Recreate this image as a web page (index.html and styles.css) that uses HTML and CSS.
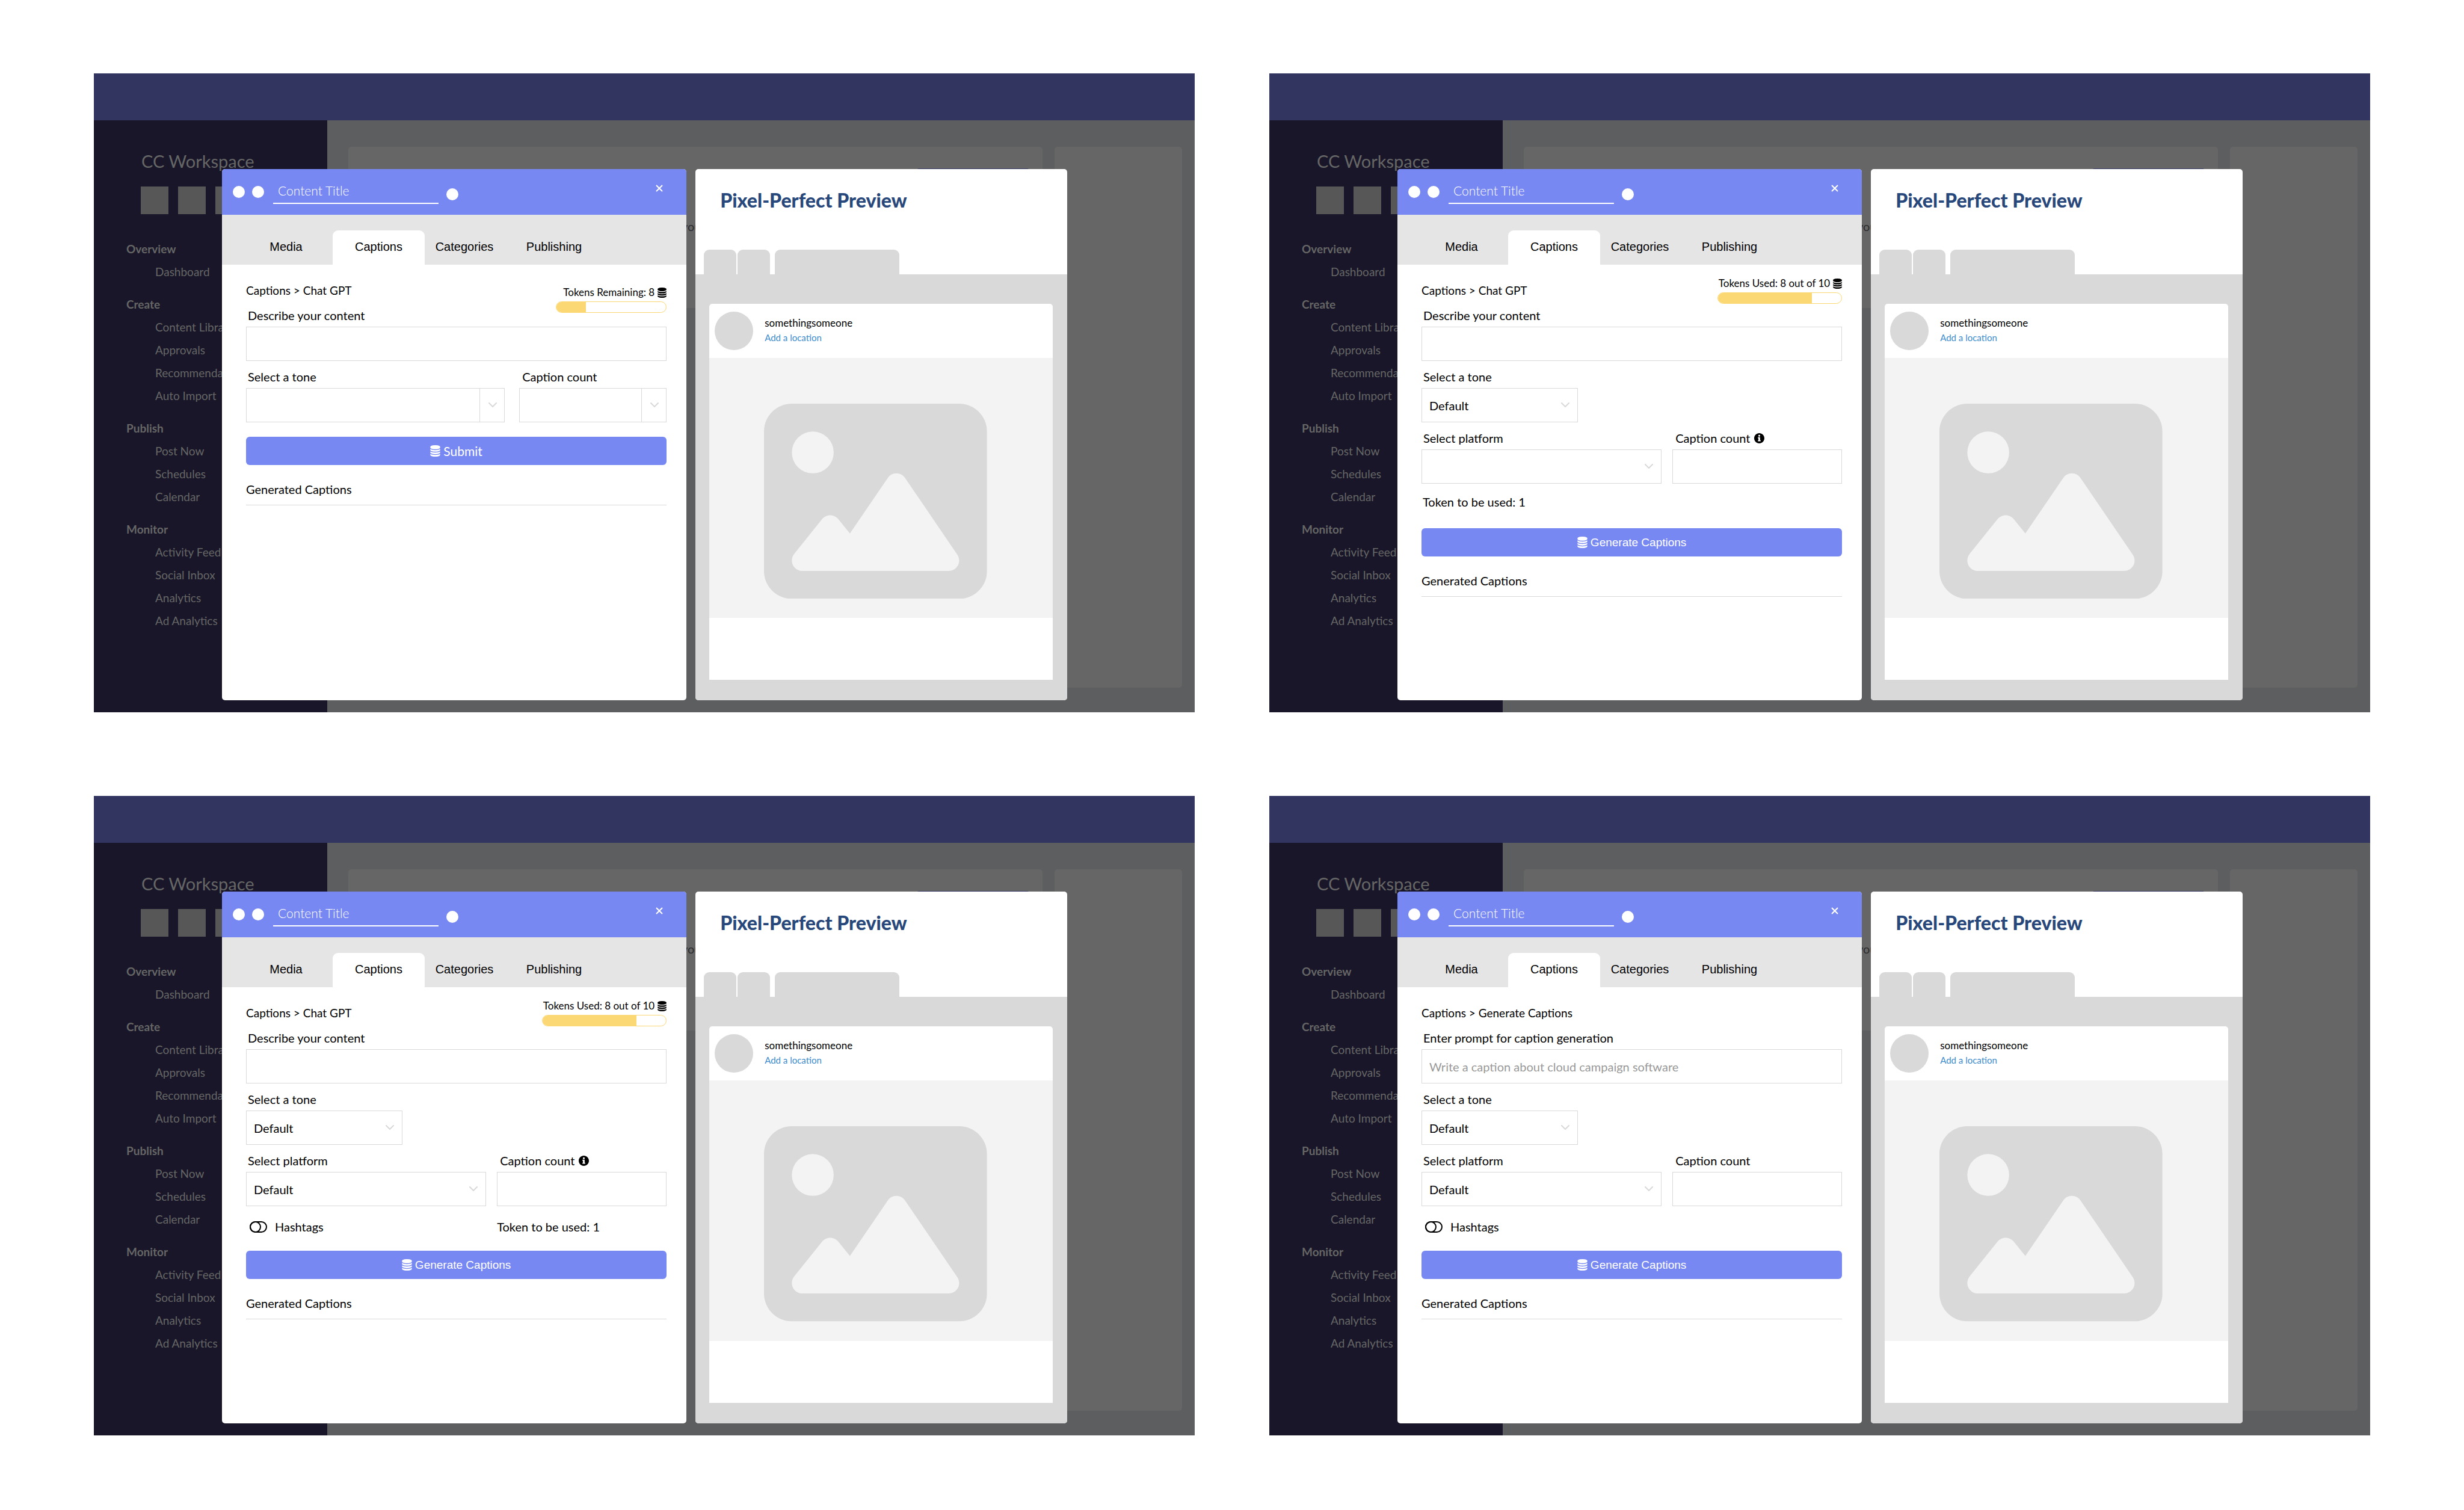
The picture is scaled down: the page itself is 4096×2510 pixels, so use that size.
FILE: index.html
```html
<!DOCTYPE html>
<html lang="en">
<head>
<meta charset="utf-8">
<title>Caption generation screens</title>
<link rel="stylesheet" href="styles.css">
</head>
<body>
<svg class="sprite" aria-hidden="true">
  <symbol id="i-db" viewBox="0 0 1536 1792"><path d="M768 768q237 0 443-43t325-127v170q0 69-103 128t-280 93.5-385 34.500-385-34.500-280-93.500-103-128v-170q119 84 325 127t443 43zM768 1536q237 0 443-43t325-127v170q0 69-103 128t-280 93.500-385 34.500-385-34.500-280-93.500-103-128v-170q119 84 325 127t443 43zM768 1152q237 0 443-43t325-127v170q0 69-103 128t-280 93.500-385 34.500-385-34.500-280-93.500-103-128v-170q119 84 325 127t443 43zM768 0q208 0 385 34.500t280 93.500 103 128v128q0 69-103 128t-280 93.500-385 34.500-385-34.500-280-93.500-103-128v-128q0-69 103-128t280-93.500 385-34.500z"/></symbol>
  <symbol id="i-info" viewBox="8 8 496 496"><path d="M256 8C119.043 8 8 119.083 8 256c0 136.997 111.043 248 248 248s248-111.003 248-248C504 119.083 392.957 8 256 8zm0 80c26 0 46 19 46 44s-20 44-46 44-46-19-46-44 20-44 46-44zm66 304c0 6.627-5.373 12-12 12H202c-6.627 0-12-5.373-12-12v-32c0-6.627 5.373-12 12-12h14v-84h-14c-6.627 0-12-5.373-12-12v-32c0-6.627 5.373-12 12-12h82c6.627 0 12 5.373 12 12v128h16c6.627 0 12 5.373 12 12v32z"/></symbol>
  <symbol id="i-chevron" viewBox="0 0 14 9"><path d="M1 1l6 6 6-6" fill="none" stroke="currentColor" stroke-width="2" stroke-linecap="round" stroke-linejoin="round"/></symbol>
  <symbol id="i-close" viewBox="0 0 12 12"><path d="M1 1l10 10M11 1L1 11" fill="none" stroke="currentColor" stroke-width="2"/></symbol>
  <symbol id="i-image" viewBox="0 32 512 448"><path d="M0 96C0 60.700 28.700 32 64 32H448c35.300 0 64 28.700 64 64V416c0 35.300-28.700 64-64 64H64c-35.300 0-64-28.700-64-64V96zM323.800 202.500c-4.500-6.600-11.900-10.500-19.800-10.500s-15.400 3.900-19.800 10.500l-87 127.600L170.700 297c-4.600-5.700-11.500-9-18.700-9s-14.200 3.300-18.700 9l-64 80c-5.800 7.200-6.900 17.100-2.900 25.400s12.400 13.600 21.600 13.600h96 32H424c8.900 0 17.100-4.900 21.200-12.800s3.600-17.400-1.400-24.700l-120-176zM112 192a48 48 0 1 0 0-96 48 48 0 1 0 0 96z"/></symbol>
</svg>

<main class="board">

  <section class="screen">
    <div class="workspace">
      <div class="topbar"></div>
      <aside class="sidebar">
        <h2 class="ws-name">CC Workspace</h2>
        <div class="tiles"><i></i><i></i><i></i></div>
        <nav class="menu">
          <h3>Overview</h3><a href="#">Dashboard</a>
          <h3>Create</h3><a href="#">Content Library</a><a href="#">Approvals</a><a href="#">Recommendations</a><a href="#">Auto Import</a>
          <h3>Publish</h3><a href="#">Post Now</a><a href="#">Schedules</a><a href="#">Calendar</a>
          <h3>Monitor</h3><a href="#">Activity Feed</a><a href="#">Social Inbox</a><a href="#">Analytics</a><a href="#">Ad Analytics</a>
        </nav>
      </aside>
      <div class="canvas">
        <div class="sheet"><span class="sheet-action"></span><p>you</p></div>
        <div class="sheet-side"></div>
      </div>
    </div>
    <div class="overlay">
      <div class="modal">
        <header class="modal-head">
          <i class="dot"></i><i class="dot"></i>
          <input class="title-input" type="text" aria-label="Content title" placeholder="Content Title">
          <i class="dot dot-low"></i>
          <button class="close" type="button" aria-label="Close"><svg><use href="#i-close"/></svg></button>
        </header>
        <div class="tabs">
          <button type="button">Media</button><button class="active" type="button">Captions</button><button type="button">Categories</button><button type="button">Publishing</button>
        </div>
        <form class="panel">
          <div class="intro">
            <div>
              <p class="crumbs"><a href="#">Captions</a> &gt; Chat GPT</p>
              <label class="label" for="a-describe">Describe your content</label>
            </div>
            <div class="tokens tokens-low">
              <p>Tokens Remaining: 8 <svg class="db"><use href="#i-db"/></svg></p>
              <div class="bar bar-short"><i style="width:27%"></i></div>
            </div>
          </div>
          <input class="box" id="a-describe" type="text">
          <div class="row row-wide">
            <div>
              <label class="label" for="a-tone">Select a tone</label>
              <div class="select split"><select class="box" id="a-tone"><option></option></select><span class="arrow"><svg><use href="#i-chevron"/></svg></span></div>
            </div>
            <div>
              <label class="label label-in" for="a-count">Caption count</label>
              <div class="select split"><select class="box" id="a-count"><option></option></select><span class="arrow"><svg><use href="#i-chevron"/></svg></span></div>
            </div>
          </div>
          <button class="submit submit-text" type="button"><svg><use href="#i-db"/></svg>Submit</button>
          <h3 class="results">Generated Captions</h3>
        </form>
      </div>
      <div class="preview">
        <h2 class="preview-title">Pixel-Perfect Preview</h2>
        <div class="preview-tabs"><i></i><i></i><i class="long"></i></div>
        <div class="stage">
          <article class="post">
            <header class="post-head"><i class="avatar"></i><div><p>somethingsomeone</p><a href="#">Add a location</a></div></header>
            <div class="picture"><svg viewBox="0 0 512 448"><use href="#i-image"/></svg></div>
            <div class="post-foot"></div>
          </article>
        </div>
      </div>
    </div>
  </section>

  <section class="screen">
    <div class="workspace">
      <div class="topbar"></div>
      <aside class="sidebar">
        <h2 class="ws-name">CC Workspace</h2>
        <div class="tiles"><i></i><i></i><i></i></div>
        <nav class="menu">
          <h3>Overview</h3><a href="#">Dashboard</a>
          <h3>Create</h3><a href="#">Content Library</a><a href="#">Approvals</a><a href="#">Recommendations</a><a href="#">Auto Import</a>
          <h3>Publish</h3><a href="#">Post Now</a><a href="#">Schedules</a><a href="#">Calendar</a>
          <h3>Monitor</h3><a href="#">Activity Feed</a><a href="#">Social Inbox</a><a href="#">Analytics</a><a href="#">Ad Analytics</a>
        </nav>
      </aside>
      <div class="canvas">
        <div class="sheet"><span class="sheet-action"></span><p>you</p></div>
        <div class="sheet-side"></div>
      </div>
    </div>
    <div class="overlay">
      <div class="modal">
        <header class="modal-head">
          <i class="dot"></i><i class="dot"></i>
          <input class="title-input" type="text" aria-label="Content title" placeholder="Content Title">
          <i class="dot dot-low"></i>
          <button class="close" type="button" aria-label="Close"><svg><use href="#i-close"/></svg></button>
        </header>
        <div class="tabs">
          <button type="button">Media</button><button class="active" type="button">Captions</button><button type="button">Categories</button><button type="button">Publishing</button>
        </div>
        <form class="panel">
          <div class="intro">
            <div>
              <p class="crumbs"><a href="#">Captions</a> &gt; Chat GPT</p>
              <label class="label" for="b-describe">Describe your content</label>
            </div>
            <div class="tokens">
              <p>Tokens Used: 8 out of 10 <svg class="db"><use href="#i-db"/></svg></p>
              <div class="bar"><i style="width:76%"></i></div>
            </div>
          </div>
          <input class="box" id="b-describe" type="text">
          <label class="label" for="b-tone">Select a tone</label>
          <div class="select select-tone"><select class="box" id="b-tone"><option>Default</option></select><span class="arrow"><svg><use href="#i-chevron"/></svg></span></div>
          <div class="row">
            <div>
              <label class="label" for="b-platform">Select platform</label>
              <div class="select"><select class="box" id="b-platform"><option></option></select><span class="arrow"><svg><use href="#i-chevron"/></svg></span></div>
            </div>
            <div>
              <label class="label label-in" for="b-count">Caption count <svg class="info"><use href="#i-info"/></svg></label>
              <input class="box" id="b-count" type="text">
            </div>
          </div>
          <div class="row meta meta-cost"><p>Token to be used: 1</p></div>
          <button class="submit" type="button"><svg><use href="#i-db"/></svg>Generate Captions</button>
          <h3 class="results">Generated Captions</h3>
        </form>
      </div>
      <div class="preview">
        <h2 class="preview-title">Pixel-Perfect Preview</h2>
        <div class="preview-tabs"><i></i><i></i><i class="long"></i></div>
        <div class="stage">
          <article class="post">
            <header class="post-head"><i class="avatar"></i><div><p>somethingsomeone</p><a href="#">Add a location</a></div></header>
            <div class="picture"><svg viewBox="0 0 512 448"><use href="#i-image"/></svg></div>
            <div class="post-foot"></div>
          </article>
        </div>
      </div>
    </div>
  </section>

  <section class="screen">
    <div class="workspace">
      <div class="topbar"></div>
      <aside class="sidebar">
        <h2 class="ws-name">CC Workspace</h2>
        <div class="tiles"><i></i><i></i><i></i></div>
        <nav class="menu">
          <h3>Overview</h3><a href="#">Dashboard</a>
          <h3>Create</h3><a href="#">Content Library</a><a href="#">Approvals</a><a href="#">Recommendations</a><a href="#">Auto Import</a>
          <h3>Publish</h3><a href="#">Post Now</a><a href="#">Schedules</a><a href="#">Calendar</a>
          <h3>Monitor</h3><a href="#">Activity Feed</a><a href="#">Social Inbox</a><a href="#">Analytics</a><a href="#">Ad Analytics</a>
        </nav>
      </aside>
      <div class="canvas">
        <div class="sheet"><span class="sheet-action"></span><p>you</p></div>
        <div class="sheet-side"></div>
      </div>
    </div>
    <div class="overlay">
      <div class="modal">
        <header class="modal-head">
          <i class="dot"></i><i class="dot"></i>
          <input class="title-input" type="text" aria-label="Content title" placeholder="Content Title">
          <i class="dot dot-low"></i>
          <button class="close" type="button" aria-label="Close"><svg><use href="#i-close"/></svg></button>
        </header>
        <div class="tabs">
          <button type="button">Media</button><button class="active" type="button">Captions</button><button type="button">Categories</button><button type="button">Publishing</button>
        </div>
        <form class="panel">
          <div class="intro">
            <div>
              <p class="crumbs"><a href="#">Captions</a> &gt; Chat GPT</p>
              <label class="label" for="c-describe">Describe your content</label>
            </div>
            <div class="tokens">
              <p>Tokens Used: 8 out of 10 <svg class="db"><use href="#i-db"/></svg></p>
              <div class="bar"><i style="width:76%"></i></div>
            </div>
          </div>
          <input class="box" id="c-describe" type="text">
          <label class="label" for="c-tone">Select a tone</label>
          <div class="select select-tone"><select class="box" id="c-tone"><option>Default</option></select><span class="arrow"><svg><use href="#i-chevron"/></svg></span></div>
          <div class="row">
            <div>
              <label class="label" for="c-platform">Select platform</label>
              <div class="select"><select class="box" id="c-platform"><option>Default</option></select><span class="arrow"><svg><use href="#i-chevron"/></svg></span></div>
            </div>
            <div>
              <label class="label label-in" for="c-count">Caption count <svg class="info"><use href="#i-info"/></svg></label>
              <input class="box" id="c-count" type="text">
            </div>
          </div>
          <div class="row meta">
            <label class="switch"><input type="checkbox">Hashtags</label>
            <p>Token to be used: 1</p>
          </div>
          <button class="submit" type="button"><svg><use href="#i-db"/></svg>Generate Captions</button>
          <h3 class="results">Generated Captions</h3>
        </form>
      </div>
      <div class="preview">
        <h2 class="preview-title">Pixel-Perfect Preview</h2>
        <div class="preview-tabs"><i></i><i></i><i class="long"></i></div>
        <div class="stage">
          <article class="post">
            <header class="post-head"><i class="avatar"></i><div><p>somethingsomeone</p><a href="#">Add a location</a></div></header>
            <div class="picture"><svg viewBox="0 0 512 448"><use href="#i-image"/></svg></div>
            <div class="post-foot"></div>
          </article>
        </div>
      </div>
    </div>
  </section>

  <section class="screen">
    <div class="workspace">
      <div class="topbar"></div>
      <aside class="sidebar">
        <h2 class="ws-name">CC Workspace</h2>
        <div class="tiles"><i></i><i></i><i></i></div>
        <nav class="menu">
          <h3>Overview</h3><a href="#">Dashboard</a>
          <h3>Create</h3><a href="#">Content Library</a><a href="#">Approvals</a><a href="#">Recommendations</a><a href="#">Auto Import</a>
          <h3>Publish</h3><a href="#">Post Now</a><a href="#">Schedules</a><a href="#">Calendar</a>
          <h3>Monitor</h3><a href="#">Activity Feed</a><a href="#">Social Inbox</a><a href="#">Analytics</a><a href="#">Ad Analytics</a>
        </nav>
      </aside>
      <div class="canvas">
        <div class="sheet"><span class="sheet-action"></span><p>you</p></div>
        <div class="sheet-side"></div>
      </div>
    </div>
    <div class="overlay">
      <div class="modal">
        <header class="modal-head">
          <i class="dot"></i><i class="dot"></i>
          <input class="title-input" type="text" aria-label="Content title" placeholder="Content Title">
          <i class="dot dot-low"></i>
          <button class="close" type="button" aria-label="Close"><svg><use href="#i-close"/></svg></button>
        </header>
        <div class="tabs">
          <button type="button">Media</button><button class="active" type="button">Captions</button><button type="button">Categories</button><button type="button">Publishing</button>
        </div>
        <form class="panel">
          <div class="intro">
            <div>
              <p class="crumbs"><a href="#">Captions</a> &gt; Generate Captions</p>
              <label class="label" for="d-prompt">Enter prompt for caption generation</label>
            </div>
          </div>
          <input class="box" id="d-prompt" type="text" placeholder="Write a caption about cloud campaign software">
          <label class="label" for="d-tone">Select a tone</label>
          <div class="select select-tone"><select class="box" id="d-tone"><option>Default</option></select><span class="arrow"><svg><use href="#i-chevron"/></svg></span></div>
          <div class="row">
            <div>
              <label class="label" for="d-platform">Select platform</label>
              <div class="select"><select class="box" id="d-platform"><option>Default</option></select><span class="arrow"><svg><use href="#i-chevron"/></svg></span></div>
            </div>
            <div>
              <label class="label label-in" for="d-count">Caption count</label>
              <input class="box" id="d-count" type="text">
            </div>
          </div>
          <div class="row meta">
            <label class="switch"><input type="checkbox">Hashtags</label>
          </div>
          <button class="submit" type="button"><svg><use href="#i-db"/></svg>Generate Captions</button>
          <h3 class="results">Generated Captions</h3>
        </form>
      </div>
      <div class="preview">
        <h2 class="preview-title">Pixel-Perfect Preview</h2>
        <div class="preview-tabs"><i></i><i></i><i class="long"></i></div>
        <div class="stage">
          <article class="post">
            <header class="post-head"><i class="avatar"></i><div><p>somethingsomeone</p><a href="#">Add a location</a></div></header>
            <div class="picture"><svg viewBox="0 0 512 448"><use href="#i-image"/></svg></div>
            <div class="post-foot"></div>
          </article>
        </div>
      </div>
    </div>
  </section>

</main>
</body>
</html>
```

FILE: styles.css
```css
*, *::before, *::after { box-sizing: border-box; }

body, h2, h3, p { margin: 0; }

body {
  background: #fff;
  color: #000;
  font-family: Lato, "Open Sans", sans-serif;
  font-size: 20px;
  line-height: 24px;
}

a { color: inherit; text-decoration: none; }
button, input, select { font: inherit; color: inherit; margin: 0; border: 0; border-radius: 0; background: none; }
svg { display: block; fill: currentColor; }
.sprite { display: none; }

/* Board of four screens */
.board {
  display: grid;
  grid-template-columns: 1fr 1fr;
  gap: 139px 124px;
  padding: 122px 156px;
}
.screen { display: grid; overflow: hidden; }
.workspace, .overlay { grid-area: 1 / 1; min-width: 0; }

/* Dimmed workspace behind the dialogs */
.workspace {
  display: grid;
  grid-template-columns: 388px 1fr;
  grid-template-rows: 78px 1fr;
  background: #5d5e60;
}
.topbar { grid-column: 1 / -1; background: #313560; }
.sidebar { background: #181628; color: #666; padding-top: 50px; }
.ws-name { padding-left: 79px; font-size: 29px; line-height: 36px; font-weight: 400; }
.tiles { display: flex; gap: 16px; margin: 24px 0 39px 78px; }
.tiles i { width: 46px; height: 46px; background: #575757; }
.menu { display: flex; flex-direction: column; padding-left: 54px; font-size: 19px; line-height: 38px; }
.menu h3 { margin-top: 16px; font-size: 19px; font-weight: 700; }
.menu h3:first-child { margin-top: 0; }
.menu a { padding-left: 48px; }
.canvas {
  display: grid;
  grid-template-columns: 1154fr 212fr;
  gap: 20px;
  align-items: start;
  padding: 44px 21px 41px 35px;
}
.sheet { display: flex; flex-direction: column; height: 268px; border-radius: 5px; background: #666; color: #2b2b2e; }
.sheet-action { align-self: flex-end; width: 189px; height: 40px; margin: 36px 21px 0 0; border-radius: 5px; background: #313560; }
.sheet p { margin-top: 44px; padding-left: 554px; }
.sheet-side { align-self: stretch; border-radius: 5px; background: #666; }

/* Dialog and preview, side by side */
.overlay {
  z-index: 1;
  display: grid;
  grid-template-columns: 5fr 4fr;
  gap: 15px;
  padding: 159px 212px 20px 213px;
}
.modal, .preview { overflow: hidden; border-radius: 5px; background: #fff; }

.modal-head { display: flex; align-items: center; gap: 12px; height: 76px; padding: 0 38px 0 18px; background: #7788f2; color: #fff; }
.dot { flex: none; width: 20px; height: 20px; border-radius: 50%; background: #fff; }
.dot-low { margin: 8px 0 0 1px; }
.title-input { width: 275px; height: 39px; margin-left: 3px; padding: 0 8px 3px; border-bottom: 2px solid #fff; font-size: 21px; font-weight: 300; }
.title-input::placeholder { color: #fff; opacity: 1; }
.close { margin: 0 0 12px auto; padding: 1px; }
.close svg { width: 12px; height: 12px; }

.tabs { display: grid; grid-template-columns: 155px 153px 132px 166px; height: 83px; padding: 26px 0 0 29px; background: #e5e5e5; }
.tabs button { padding: 0 0 3px; font-family: "Liberation Sans", Arial, sans-serif; font-size: 20px; }
.tabs .active { border-radius: 9px 9px 0 0; background: #fff; }

.panel { padding: 0 33px 0 40px; }
.intro { display: flex; justify-content: space-between; }
.crumbs { height: 58px; padding-top: 31px; font-size: 19px; }
.label { display: flex; align-items: flex-end; gap: 6px; height: 45px; padding: 0 3px 7px; }
.label-in { padding-left: 5px; }
.info { width: 17px; height: 17px; margin-bottom: 3px; }
.box { display: block; width: 100%; height: 57px; padding: 0 12px; border: 1px solid #d9d9d9; background: #fff; }
.box::placeholder { color: #999; opacity: 1; }

.tokens { display: flex; flex-direction: column; align-items: flex-end; gap: 5px; padding-top: 21px; }
.tokens-low { padding-top: 36px; }
.tokens p { display: flex; align-items: center; gap: 5px; font-size: 17px; line-height: 20px; }
.db { width: 15px; height: 17px; }
.bar { width: 207px; height: 19px; overflow: hidden; border: 1px solid #fcd874; border-radius: 10px; }
.bar-short { width: 184px; }
.bar i { display: block; height: 100%; background: #fcd874; }

.row { display: grid; grid-template-columns: 399fr 282fr; gap: 18px; }
.row-wide { grid-template-columns: 430fr 245fr; gap: 24px; }
.select { display: grid; }
.select-tone { width: 260px; }
.select .box { grid-area: 1 / 1; appearance: none; }
.arrow { grid-area: 1 / 1; justify-self: end; display: grid; place-items: center; width: 42px; color: #d9d9d9; pointer-events: none; }
.arrow svg { width: 14px; height: 9px; }
.split .arrow { border-left: 1px solid #d9d9d9; }

.meta { height: 74px; padding-top: 22px; }
.meta-cost { padding: 18px 0 0 2px; }
.switch { display: flex; align-items: flex-start; gap: 13px; padding-left: 6px; }
.switch input { appearance: none; width: 29px; height: 19px; margin-top: 3px; border: 2px solid #000; border-radius: 10px; }
.switch input::before { content: ""; display: block; width: 19px; height: 19px; margin: -2px; border: 2px solid #000; border-radius: 50%; }

.submit {
  display: flex; align-items: center; justify-content: center; gap: 5px;
  width: 100%; height: 47px; border-radius: 6px; background: #7788f2; color: #fff;
  font-family: "Liberation Sans", Arial, sans-serif; font-size: 19px;
}
.submit-text { margin-top: 24px; font-family: Lato, "Open Sans", sans-serif; font-size: 21px; }
.submit svg { width: 17px; height: 19px; }
.results { height: 67px; padding-top: 28px; border-bottom: 1px solid #d9d9d9; font-size: 20px; font-weight: 400; }

/* Preview column */
.preview { display: flex; flex-direction: column; }
.preview-title { padding: 33px 41px 0; color: #28477a; font-size: 32px; line-height: 38px; font-weight: 900; }
.preview-tabs { display: flex; gap: 2px; margin-top: 63px; padding-left: 14px; }
.preview-tabs i { width: 54px; height: 41px; border-radius: 9px 9px 0 0; background: #d9d9d9; }
.preview-tabs .long { width: 207px; margin-left: 6px; }
.stage { flex: 1; padding: 49px 24px 34px 23px; background: #d9d9d9; }
.post { overflow: hidden; border-radius: 5px 5px 0 0; background: #fff; }
.post-head { display: flex; gap: 19px; height: 90px; padding: 13px 9px; font-size: 17px; }
.post-head p { padding-top: 7px; }
.post-head a { display: block; color: #3d8cce; font-size: 15px; }
.avatar { width: 64px; height: 64px; border-radius: 50%; background: #d9d9d9; }
.picture { padding: 76px 109px 32px 91px; background: #f3f3f3; color: #d9d9d9; }
.picture svg { width: 100%; height: auto; }
.post-foot { height: 103px; }
```
